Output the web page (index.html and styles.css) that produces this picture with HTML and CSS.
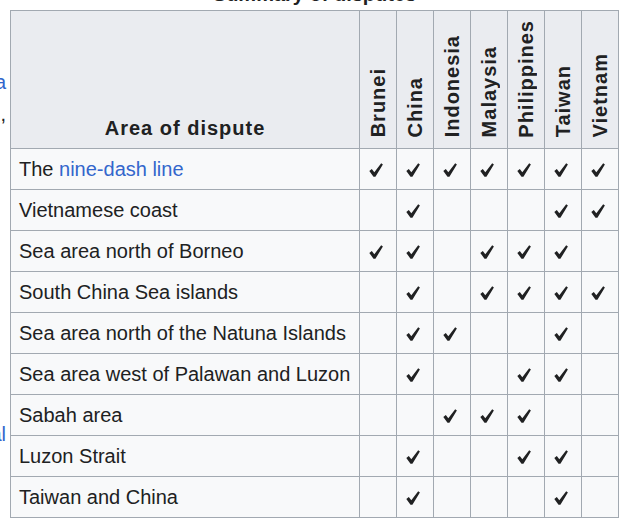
FILE: index.html
```html
<!DOCTYPE html>
<html lang="en">
<head>
<meta charset="utf-8">
<title>Summary of disputes</title>
<link rel="stylesheet" href="styles.css">
</head>
<body>
<div class="page">
  <div class="side">
    <div class="line"><a href="#">a</a></div>
    <div class="line">,</div>
    <div class="line"></div>
    <div class="line"></div>
    <div class="line"></div>
    <div class="line"></div>
    <div class="line"></div>
    <div class="line"></div>
    <div class="line"></div>
    <div class="line"></div>
    <div class="line"></div>
    <div class="line"><a href="#">al</a></div>
  </div>
  <table class="wikitable">
    <caption>Summary of disputes</caption>
    <colgroup>
      <col class="c-area">
      <col class="c-n"><col class="c-n"><col class="c-n"><col class="c-n"><col class="c-n"><col class="c-n"><col class="c-n">
    </colgroup>
    <thead>
      <tr>
        <th class="area">Area of dispute</th>
        <th class="vert"><span>Brunei</span></th>
        <th class="vert"><span>China</span></th>
        <th class="vert"><span>Indonesia</span></th>
        <th class="vert"><span>Malaysia</span></th>
        <th class="vert"><span>Philippines</span></th>
        <th class="vert"><span>Taiwan</span></th>
        <th class="vert"><span>Vietnam</span></th>
      </tr>
    </thead>
    <tbody>
      <tr><td>The <a href="#">nine-dash line</a></td><td class="y"></td><td class="y"></td><td class="y"></td><td class="y"></td><td class="y"></td><td class="y"></td><td class="y"></td></tr>
      <tr><td>Vietnamese coast</td><td></td><td class="y"></td><td></td><td></td><td></td><td class="y"></td><td class="y"></td></tr>
      <tr><td>Sea area north of Borneo</td><td class="y"></td><td class="y"></td><td></td><td class="y"></td><td class="y"></td><td class="y"></td><td></td></tr>
      <tr><td>South China Sea islands</td><td></td><td class="y"></td><td></td><td class="y"></td><td class="y"></td><td class="y"></td><td class="y"></td></tr>
      <tr><td>Sea area north of the Natuna Islands</td><td></td><td class="y"></td><td class="y"></td><td></td><td></td><td class="y"></td><td></td></tr>
      <tr><td>Sea area west of Palawan and Luzon</td><td></td><td class="y"></td><td></td><td></td><td class="y"></td><td class="y"></td><td></td></tr>
      <tr><td>Sabah area</td><td></td><td></td><td class="y"></td><td class="y"></td><td class="y"></td><td></td><td></td></tr>
      <tr><td>Luzon Strait</td><td></td><td class="y"></td><td></td><td></td><td class="y"></td><td class="y"></td><td></td></tr>
      <tr><td>Taiwan and China</td><td></td><td class="y"></td><td></td><td></td><td></td><td class="y"></td><td></td></tr>
    </tbody>
  </table>
</div>
<script>
document.querySelectorAll('td.y').forEach(function (td) {
  td.innerHTML = '<svg class="chk" viewBox="0 0 14 14" width="14" height="14" aria-label="yes"><path d="M0.3 7.9 L2.8 6.1 L5.3 9.3 L12.2 0.2 L13.9 1.6 L6.4 13.8 L4.5 13.8 Z"/></svg>';
});
</script>
</body>
</html>
```
FILE: styles.css
```css
html, body {
  margin: 0;
  padding: 0;
  background: #ffffff;
}

body {
  font-family: "Liberation Sans", Arial, sans-serif;
  font-size: 20px;
  line-height: 1.6;
  color: #202122;
}

a {
  color: #3366cc;
  text-decoration: none;
}

.page {
  display: flex;
  align-items: flex-start;
  gap: 4px;
}

.side {
  width: 6px;
  flex: none;
  padding-top: 66px;
}

.line {
  height: 32px;
  display: flex;
  justify-content: flex-end;
  white-space: nowrap;
}

.wikitable {
  margin-top: -22px;
  border-collapse: collapse;
  table-layout: fixed;
  width: 609px;
  background: #f8f9fa;
  color: #202122;
}

.wikitable caption {
  font-weight: bold;
  text-align: center;
}

.c-area { width: 349px; }
.c-n { width: 37px; }

.wikitable th,
.wikitable td {
  border: 1px solid #a2a9b1;
  padding: 4px 8px;
}

.wikitable th {
  background: #eaecf0;
  font-weight: bold;
  letter-spacing: 1px;
  vertical-align: bottom;
  text-align: center;
}

.wikitable th.vert {
  padding: 9px 0 10px;
}

.wikitable th.vert span {
  display: block;
  width: 32px;
  margin: 0 auto;
  writing-mode: vertical-rl;
  transform: rotate(180deg);
  line-height: 32px;
}

.wikitable td.y {
  padding: 4px 0;
  text-align: center;
}

.chk {
  display: inline-block;
  vertical-align: middle;
  fill: #202122;
  margin-left: -5px;
}
```
